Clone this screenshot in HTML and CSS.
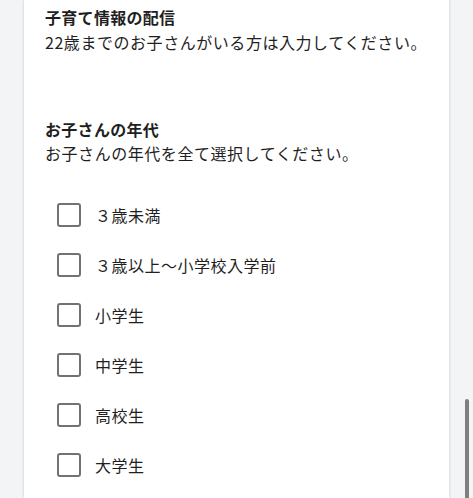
FILE: index.html
```html
<!DOCTYPE html>
<html lang="ja">
<head>
<meta charset="utf-8">
<link rel="stylesheet" href="styles.css">
</head>
<body>
<div class="page">
  <main class="card">
    <section class="block">
      <h2 class="title">子育て情報の配信</h2>
      <p class="desc">22歳までのお子さんがいる方は入力してください。</p>
    </section>
    <section class="block second">
      <h2 class="title">お子さんの年代</h2>
      <p class="desc">お子さんの年代を全て選択してください。</p>
      <ul class="options">
        <li class="option"><span class="box"></span><span class="label">３歳未満</span></li>
        <li class="option"><span class="box"></span><span class="label">３歳以上〜小学校入学前</span></li>
        <li class="option"><span class="box"></span><span class="label">小学生</span></li>
        <li class="option"><span class="box"></span><span class="label">中学生</span></li>
        <li class="option"><span class="box"></span><span class="label">高校生</span></li>
        <li class="option"><span class="box"></span><span class="label">大学生</span></li>
      </ul>
    </section>
  </main>
  <div class="scrollbar"></div>
</div>
</body>
</html>
```

FILE: styles.css
```css
* { box-sizing: border-box; }
html, body {
  margin: 0;
  padding: 0;
  height: 100%;
  overflow: hidden;
}
body {
  background: #f3f4f6;
  font-family: "Noto Sans CJK JP", "Noto Sans", sans-serif;
  color: #1f1f1f;
}
.page {
  position: relative;
  height: 498px;
  padding-left: 24px;
}
.card {
  width: 425px;
  height: 100%;
  background: #ffffff;
  box-shadow: 0 0 3px rgba(0, 0, 0, 0.18);
  padding: 5px 0 0 21px;
}
.title {
  margin: 0;
  font-size: 16px;
  line-height: 24px;
  font-weight: 700;
  letter-spacing: 0.3px;
}
.desc {
  margin: 1px 0 0;
  font-size: 16px;
  line-height: 24px;
  font-weight: 400;
  letter-spacing: 0.55px;
}
.second {
  margin-top: 63px;
}
.second .desc {
  margin-top: 0;
}
.options {
  list-style: none;
  margin: 25px 0 0;
  padding: 0 0 0 12px;
}
.option {
  display: flex;
  align-items: center;
  height: 50px;
  gap: 14px;
}
.box {
  width: 24px;
  height: 24px;
  border: 2px solid #727272;
  border-radius: 3px;
  flex: none;
}
.label {
  font-size: 16px;
  line-height: 24px;
  letter-spacing: 0.5px;
}
.scrollbar {
  position: absolute;
  left: 465px;
  top: 399px;
  width: 4px;
  height: 110px;
  border-radius: 2px;
  background: #7f7f7f;
}
```
